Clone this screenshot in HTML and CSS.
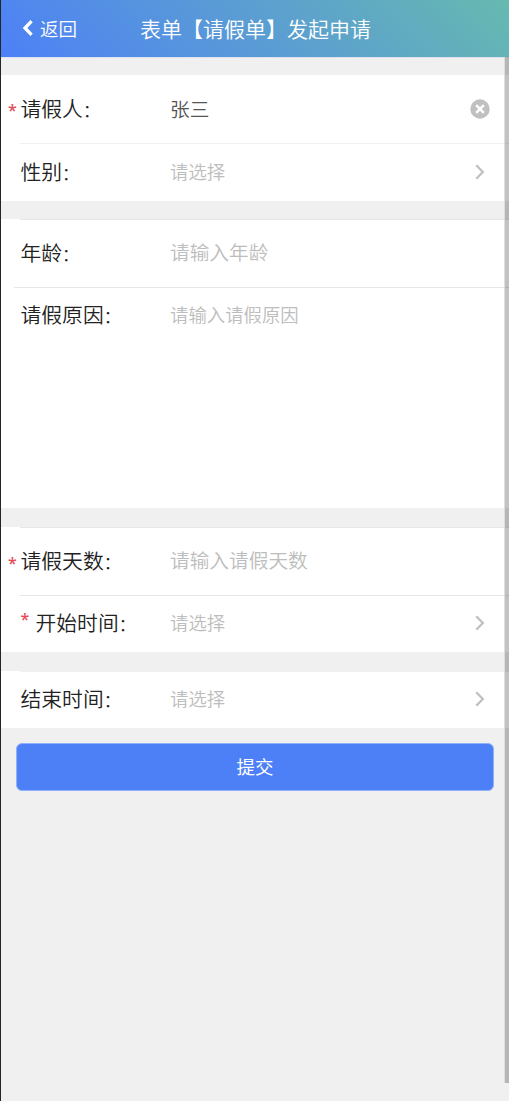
FILE: index.html
```html
<!DOCTYPE html>
<html lang="zh-CN">
<head>
<meta charset="utf-8">
<title>表单【请假单】发起申请</title>
<link rel="stylesheet" href="styles.css">
</head>
<body>
<div class="app">
  <header class="header">
    <a class="back"><svg width="12" height="18" viewBox="0 0 12 18"><path d="M9.6 2.2 3 9l6.6 6.8" fill="none" stroke="#fff" stroke-width="3.3"/></svg><span>返回</span></a>
    <h1 class="title">表单【请假单】发起申请</h1>
  </header>
  <main class="form">
    <section class="group">
      <div class="row field first"><span class="star">*</span><label class="label">请假人<span class="colon">：</span></label><span class="value filled">张三</span>
        <svg class="clear" width="20" height="20" viewBox="0 0 20 20"><circle cx="10" cy="10" r="9.7" fill="#c0c0c0"/><path d="m6.2 6.2 7.6 7.6m0-7.6-7.6 7.6" stroke="#fff" stroke-width="2.5"/></svg></div>
      <div class="line soft"></div>
      <div class="row picker first"><label class="label">性别<span class="colon">：</span></label><span class="value small">请选择</span><svg class="arrow" width="10" height="16" viewBox="0 0 10 16"><path d="m1.3 1.3 6.5 6.7-6.5 6.7" fill="none" stroke="#c0c0c0" stroke-width="2.3"/></svg></div>
    </section>
    <section class="group">
      <div class="line"></div>
      <div class="row field"><label class="label">年龄<span class="colon">：</span></label><span class="value">请输入年龄</span></div>
      <div class="line wide"></div>
      <div class="row reason"><label class="label">请假原因<span class="colon">：</span></label><span class="value small">请输入请假原因</span></div>
    </section>
    <section class="group">
      <div class="line"></div>
      <div class="row field"><span class="star">*</span><label class="label">请假天数<span class="colon">：</span></label><span class="value">请输入请假天数</span></div>
      <div class="line"></div>
      <div class="row picker"><label class="label"><span class="mark">*</span>开始时间<span class="colon">：</span></label><span class="value small">请选择</span><svg class="arrow" width="10" height="16" viewBox="0 0 10 16"><path d="m1.3 1.3 6.5 6.7-6.5 6.7" fill="none" stroke="#c0c0c0" stroke-width="2.3"/></svg></div>
    </section>
    <section class="group">
      <div class="line soft"></div>
      <div class="row picker"><label class="label">结束时间<span class="colon">：</span></label><span class="value small">请选择</span><svg class="arrow" width="10" height="16" viewBox="0 0 10 16"><path d="m1.3 1.3 6.5 6.7-6.5 6.7" fill="none" stroke="#c0c0c0" stroke-width="2.3"/></svg></div>
    </section>
    <button class="submit">提交</button>
  </main>
  <div class="scrollbar"></div>
</div>
</body>
</html>
```
FILE: styles.css
```css
* { box-sizing: border-box; }
body {
  margin: 0;
  font-family: "Noto Sans CJK SC", sans-serif;
  font-weight: 350;
  color: #222;
  background: #f0f0f0;
}
.app {
  position: relative;
  height: 1101px;
  border-left: 1px solid #252528;
  overflow: hidden;
}
.header {
  display: grid;
  grid-template-columns: 120px 1fr 119px;
  align-items: center;
  height: 57px;
  padding-bottom: 2px;
  color: #fff;
  background: linear-gradient(45deg, #4d80f7, #67b9b0);
}
.back {
  display: flex;
  align-items: center;
  gap: 6px;
  padding-left: 21px;
  font-size: 18.5px;
  line-height: 28px;
}
.title {
  margin: 0;
  font-size: 21px;
  line-height: 28px;
  font-weight: 350;
  text-align: center;
  white-space: nowrap;
}
.form {
  padding-top: 17px;
  border-top: 1px solid #dde3ee;
}
.group {
  margin-bottom: 19px;
  background: #fff;
}
.group:first-child { margin-bottom: 18px; }
.group:last-of-type { margin-bottom: 15px; }
.line {
  height: 1px;
  margin-left: 19px;
  background: #e6e6e6;
}
.line.soft { background: #f0f0f0; }
.line.wide { margin-left: 13px; }
.row {
  position: relative;
  display: flex;
  align-items: center;
  padding: 0 24px 0 19.5px;
}
.field {
  height: 67px;
  padding-right: 19px;
}
.field.first { height: 68px; }
.field .clear { margin-left: auto; }
.picker {
  height: 56px;
  padding-bottom: 2px;
}
.picker.first { height: 57px; }
.reason {
  height: 220px;
  align-items: flex-start;
  padding-top: 12px;
}
.label {
  flex: 0 0 149.5px;
  margin-top: -3px;
  font-size: 20.8px;
  line-height: 30px;
  white-space: nowrap;
}
.colon {
  display: inline-block;
  width: 11px;
  font-size: 17px;
  line-height: 17px;
  text-spacing-trim: space-all;
}
.value {
  margin-top: -3px;
  font-size: 19.7px;
  line-height: 30px;
  color: #bdbdbd;
}
.small { font-size: 18.4px; }
.filled {
  margin-top: 0;
  color: #555;
}
.picker.first .label, .picker.first .value { margin-top: -1px; }
.reason .label, .reason .value { margin-top: -1.5px; }
.star, .mark {
  color: #e34d59;
  font-family: "Open Sans", sans-serif;
  font-size: 16px;
  font-weight: 600;
}
.star {
  position: absolute;
  left: 7px;
  top: 20px;
  line-height: 30px;
}
.mark {
  display: inline-block;
  width: 15px;
  line-height: 16px;
  vertical-align: 6px;
}
.arrow { margin-left: auto; }
.submit {
  display: block;
  width: 478px;
  height: 48px;
  margin: 0 0 0 15px;
  padding: 0 0 2px;
  font: 400 18.5px/44px "Noto Sans CJK SC", sans-serif;
  color: #fff;
  background: #4d80f7;
  border: 1px solid #8fb0fa;
  border-radius: 6px;
}
.scrollbar {
  position: absolute;
  top: 57px;
  right: 0;
  width: 5px;
  height: 1026px;
  background: rgba(0, 0, 0, 0.24);
  border-left: 1px solid #dedede;
}
```
